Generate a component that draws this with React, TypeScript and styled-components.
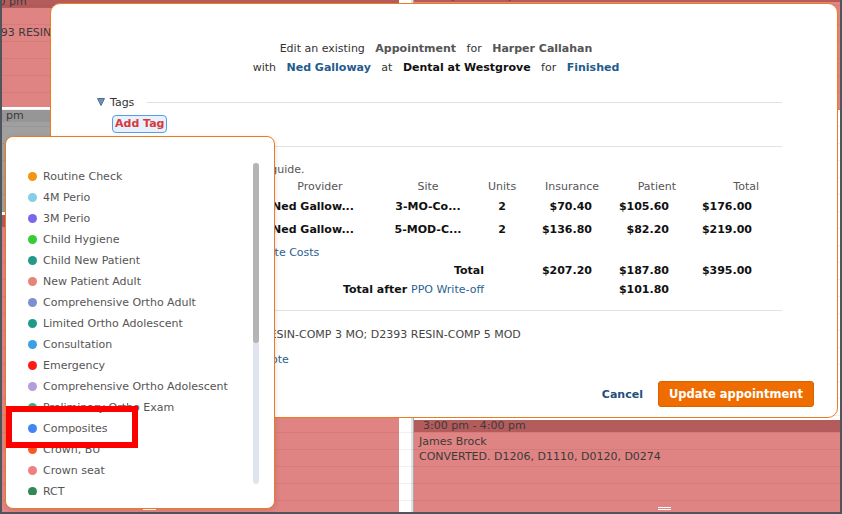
import React from "react";
import styled, { createGlobalStyle } from "styled-components";

const GlobalStyle = createGlobalStyle`
  html, body {
    margin: 0;
    padding: 0;
  }
  body {
    font-family: "DejaVu Sans", Verdana, sans-serif;
    font-size: 11px;
    color: #333;
  }
`;

type Tone = "pink" | "gray";

interface Appt {
  top: number;
  height: number;
  tone: Tone;
  time: string;
  indent: number;
  lines: string[];
  handle?: number;
}

// 캘린더 배경 (모달 뒤)
const columnA: Appt[] = [
  { top: -4, height: 111, tone: "pink", time: "2:00 pm - 3:00 pm", indent: 16, lines: ["Sofia Reyes", "D2392 MO; D2393 RESIN-COMP 5 MOD"] },
  { top: 110, height: 102, tone: "gray", time: "3:00 pm - 4:00 pm", indent: 13, lines: ["Blocked"] },
  { top: 215, height: 297, tone: "pink", time: "4:00 pm - 5:00 pm", indent: 13, lines: ["Mia Jensen"], handle: 235 },
];

const columnB: Appt[] = [
  { top: -10, height: 120, tone: "pink", time: "1:00 pm - 2:00 pm", indent: 9, lines: [] },
  { top: 420, height: 92, tone: "pink", time: "3:00 pm - 4:00 pm", indent: 9, lines: ["James Brock", "CONVERTED. D1206, D1110, D0120, D0274"], handle: 244 },
];

const tags = [
  { name: "Routine Check", color: "#f3960f" },
  { name: "4M Perio", color: "#86cdea" },
  { name: "3M Perio", color: "#7b66ee" },
  { name: "Child Hygiene", color: "#35cc35" },
  { name: "Child New Patient", color: "#239a88" },
  { name: "New Patient Adult", color: "#e8837a" },
  { name: "Comprehensive Ortho Adult", color: "#7e8fcf" },
  { name: "Limited Ortho Adolescent", color: "#1f9a8a" },
  { name: "Consultation", color: "#3d9fe6" },
  { name: "Emergency", color: "#ff1a14" },
  { name: "Comprehensive Ortho Adolescent", color: "#b39ddb" },
  { name: "Preliminary Ortho Exam", color: "#3cb371" },
  { name: "Composites", color: "#4285f4" },
  { name: "Crown, BU", color: "#ff5722" },
  { name: "Crown seat", color: "#f08080" },
  { name: "RCT", color: "#2e8b57" },
];

const procedures = [
  { code: "D2392", provider: "Ned Gallow...", site: "3-MO-Co...", units: "2", ins: "$70.40", pat: "$105.60", total: "$176.00" },
  { code: "D2393", provider: "Ned Gallow...", site: "5-MOD-C...", units: "2", ins: "$136.80", pat: "$82.20", total: "$219.00" },
];

const DayColumn = ({ appts, offset }: { appts: Appt[]; offset: number }) => (
  <Column>
    {appts.map((a) => (
      <Appointment key={a.top} $top={a.top} $height={a.height} $left={offset} $tone={a.tone} $handle={a.handle}>
        <ApptHeader $tone={a.tone} $indent={a.indent}>
          {a.time}
        </ApptHeader>
        <ApptBody>
          {a.lines.map((l) => (
            <div key={l}>{l}</div>
          ))}
        </ApptBody>
      </Appointment>
    ))}
  </Column>
);

const TagMenu = () => (
  <Menu>
    <TagList>
      {tags.map((t) => (
        <TagItem key={t.name}>
          <Dot $color={t.color} />
          {t.name}
        </TagItem>
      ))}
    </TagList>
    <Track>
      <Thumb />
    </Track>
  </Menu>
);

const App = () => {
  return (
    <>
      <GlobalStyle />
      <Screen>
        <Calendar>
          <DayColumn appts={columnA} offset={-94} />
          <Gutter />
          <DayColumn appts={columnB} offset={0} />
        </Calendar>

        <Modal>
          <Title>
            <div>
              Edit an existing <Em $tone='muted'>Appointment</Em> for <Em $tone='muted'>Harper Callahan</Em>
            </div>
            <div>
              with <Em $tone='link'>Ned Galloway</Em> at <Em $tone='dark'>Dental at Westgrove</Em> for{" "}
              <Em $tone='link'>Finished</Em>
            </div>
          </Title>

          <TagsRow>
            <svg width='8' height='8' viewBox='0 0 8 8'>
              <polygon points='0.5,0.5 7.5,0.5 4,7.5' fill='#6f93b8' stroke='#4c6f93' strokeWidth='1' strokeLinejoin='round' />
            </svg>
            <span>Tags</span>
            <Rule />
          </TagsRow>
          <AddTag>Add Tag</AddTag>
          <Divider $top={13} />

          <FormRow $top={15}>
            <Label>Procedures</Label>
            <div>
              <Hint>Fees per guide.</Hint>
              <CostTable>
                <HeadCell $align='left'>Code</HeadCell>
                <HeadCell $align='center'>Provider</HeadCell>
                <HeadCell $align='center'>Site</HeadCell>
                <HeadCell $align='center'>Units</HeadCell>
                <HeadCell $align='right'>Insurance</HeadCell>
                <HeadCell $align='right'>Patient</HeadCell>
                <HeadCell $align='right'>Total</HeadCell>
                {procedures.map((p) => (
                  <React.Fragment key={p.code}>
                    <DataCell $align='left'>{p.code}</DataCell>
                    <DataCell $align='left'>{p.provider}</DataCell>
                    <DataCell $align='center'>{p.site}</DataCell>
                    <DataCell $align='center'>{p.units}</DataCell>
                    <DataCell $align='right'>{p.ins}</DataCell>
                    <DataCell $align='right'>{p.pat}</DataCell>
                    <DataCell $align='right'>{p.total}</DataCell>
                  </React.Fragment>
                ))}
              </CostTable>
              <LinkLine>
                <Link>Recalculate Costs</Link>
              </LinkLine>
              <CostTable>
                <TotalLabel>Total</TotalLabel>
                <TotalCell />
                <TotalCell $align='right'>$207.20</TotalCell>
                <TotalCell $align='right'>$187.80</TotalCell>
                <TotalCell $align='right'>$395.00</TotalCell>
                <TotalLabel $short>
                  Total after <Link>PPO Write-off</Link>
                </TotalLabel>
                <TotalCell $short />
                <TotalCell $short />
                <TotalCell $short $align='right'>
                  $101.80
                </TotalCell>
                <TotalCell $short />
              </CostTable>
            </div>
          </FormRow>

          <Divider $top={11} />

          <FormRow $top={16}>
            <Label>Description</Label>
            <Value $shift={2}>D2392 RESIN-COMP 3 MO; D2393 RESIN-COMP 5 MOD</Value>
          </FormRow>
          <FormRow $top={9}>
            <Label>Notes</Label>
            <Value $shift={-5}>
              <Link>+ Add a Note</Link>
            </Value>
          </FormRow>

          <Footer>
            <Cancel>Cancel</Cancel>
            <PrimaryButton>Update appointment</PrimaryButton>
          </Footer>
        </Modal>

        <TagMenu />
        <Highlight />
      </Screen>
    </>
  );
};

export default App;

const Screen = styled.div`
  position: relative;
  width: 842px;
  height: 514px;
  overflow: hidden;
  padding: 0 2px 2px;
  box-sizing: border-box;
  background: #50555b;
`;

const Calendar = styled.div`
  position: relative;
  height: 512px;
  display: grid;
  grid-template-columns: 397px 14px 1fr;
  background: #fff;

  &::after {
    content: "";
    position: absolute;
    inset: 0;
    pointer-events: none;
    background: repeating-linear-gradient(to bottom, transparent 0 16px, rgba(0, 0, 0, 0.055) 16px 17px);
    background-position: 0 8px;
  }
`;

const Column = styled.div`
  position: relative;
  overflow: hidden;

  &:last-child {
    border-left: 1px solid #a9a9a9;
  }
`;

const Gutter = styled.div`
  border-right: 2px solid #e2e2e2;
`;

const Appointment = styled.div<{ $top: number; $height: number; $left: number; $tone: Tone; $handle?: number }>`
  position: absolute;
  top: ${(p) => p.$top}px;
  left: ${(p) => p.$left}px;
  right: 0;
  height: ${(p) => p.$height}px;
  background: ${(p) => (p.$tone === "pink" ? "#e08383" : "#a0a0a0")};
  color: #3a3a3a;
  white-space: nowrap;

  &::after {
    content: "";
    display: ${(p) => (p.$handle ? "block" : "none")};
    position: absolute;
    left: ${(p) => p.$handle ?? 0}px;
    bottom: 2px;
    width: 13px;
    height: 1px;
    border-top: 1px solid #fff;
    border-bottom: 1px solid #fff;
  }
`;

const ApptHeader = styled.div<{ $tone: Tone; $indent: number }>`
  height: 12px;
  line-height: 12px;
  padding-left: ${(p) => p.$indent}px;
  background: ${(p) => (p.$tone === "pink" ? "#b45c5c" : "#969696")};
`;

const ApptBody = styled.div`
  padding: 3px 5px 0;
  line-height: 14.5px;
`;

const Modal = styled.div`
  position: absolute;
  left: 50px;
  top: 3px;
  width: 788px;
  height: 415px;
  box-sizing: border-box;
  background: #fff;
  border: 1px solid #ee7a1f;
  border-radius: 10px;
  padding: 35px 55px 0 46px;
  display: flex;
  flex-direction: column;
`;

const Title = styled.div`
  text-align: center;
  line-height: 19px;
  color: #333;
`;

const Em = styled.b<{ $tone: "muted" | "link" | "dark" }>`
  margin: 0 7px;
  color: ${(p) => (p.$tone === "muted" ? "#555" : p.$tone === "link" ? "#245b8e" : "#111")};
`;

const TagsRow = styled.div`
  display: flex;
  align-items: center;
  gap: 5px;
  height: 16px;
  margin-top: 17px;
  color: #333;

  svg {
    flex: none;
  }
`;

const Rule = styled.div`
  flex: 1;
  height: 1px;
  margin-left: 8px;
  background: #e0e0e0;
`;

const AddTag = styled.button`
  align-self: flex-start;
  box-sizing: border-box;
  height: 18px;
  margin: 5px 0 0 15px;
  padding: 0 2px;
  font: bold 11px "DejaVu Sans", Verdana, sans-serif;
  line-height: 16px;
  color: #d9383c;
  background: #e8f2fd;
  border: 1px solid #5b9be8;
  border-radius: 4px;
`;

const Divider = styled.div<{ $top: number }>`
  height: 1px;
  margin-top: ${(p) => p.$top}px;
  background: #e2e2e2;
  flex: none;
`;

const FormRow = styled.div<{ $top: number }>`
  display: grid;
  grid-template-columns: 123px 1fr;
  margin-top: ${(p) => p.$top}px;
  line-height: 16px;
`;

const Label = styled.div`
  color: #555;
`;

const Value = styled.div<{ $shift: number }>`
  color: #444;
  margin-left: ${(p) => p.$shift}px;
  white-space: nowrap;
`;

const Hint = styled.div`
  color: #555;
  line-height: 16px;
`;

const CostTable = styled.div`
  display: grid;
  grid-template-columns: 52px 96px 120px 28px 83px 77px 83px;
`;

const HeadCell = styled.div<{ $align: "left" | "center" | "right" }>`
  height: 17px;
  line-height: 18px;
  text-align: ${(p) => p.$align};
  color: #555;
  white-space: nowrap;
`;

const DataCell = styled.div<{ $align: "left" | "center" | "right" }>`
  height: 23px;
  line-height: 23px;
  text-align: ${(p) => p.$align};
  padding-right: ${(p) => (p.$align === "right" ? 7 : 0)}px;
  font-weight: bold;
  color: #111;
  white-space: nowrap;
`;

const TotalLabel = styled.div<{ $short?: boolean }>`
  grid-column: span 3;
  height: ${(p) => (p.$short ? 18 : 20)}px;
  line-height: ${(p) => (p.$short ? 18 : 20)}px;
  text-align: right;
  padding-right: 4px;
  font-weight: bold;
  color: #111;
`;

const TotalCell = styled.div<{ $short?: boolean; $align?: "right" }>`
  height: ${(p) => (p.$short ? 18 : 20)}px;
  line-height: ${(p) => (p.$short ? 18 : 20)}px;
  text-align: ${(p) => p.$align ?? "left"};
  padding-right: 7px;
  font-weight: bold;
  color: #111;
`;

const LinkLine = styled.div`
  margin: 4px 0 0;
  padding-left: 2px;
  line-height: 16px;
`;

const Link = styled.a`
  color: #2a5f92;
  font-weight: normal;
  text-decoration: none;
`;

const Footer = styled.div`
  display: flex;
  justify-content: flex-end;
  align-items: center;
  gap: 15px;
  margin: 13px -32px 0 0;
`;

const Cancel = styled.a`
  font-weight: bold;
  color: #1f4f7e;
`;

const PrimaryButton = styled.button`
  height: 26px;
  padding: 0 10px;
  font: bold 11.5px "DejaVu Sans", Verdana, sans-serif;
  color: #fff;
  background: #ef6d00;
  border: 1px solid #d86200;
  border-radius: 3px;
`;

const Menu = styled.div`
  position: absolute;
  left: 5px;
  top: 136px;
  width: 270px;
  height: 373px;
  box-sizing: border-box;
  display: flex;
  padding: 19px 15px 13px 0;
  background: #fff;
  border: 1px solid #ee7a1f;
  border-radius: 8px;
  box-shadow: 1px 1px 5px rgba(0, 0, 0, 0.1);
`;

const TagList = styled.ul`
  flex: 1;
  margin: 0;
  padding: 10px 0 0 22px;
  list-style: none;
  overflow: hidden;
`;

const TagItem = styled.li`
  display: flex;
  align-items: center;
  gap: 6px;
  height: 21px;
  color: #555;
  white-space: nowrap;
`;

const Dot = styled.span<{ $color: string }>`
  flex: none;
  width: 9px;
  height: 9px;
  border-radius: 50%;
  background: ${(p) => p.$color};
`;

const Track = styled.div`
  width: 6px;
  margin: 7px 0 11px;
  border-radius: 3px;
  background: #e0e4ee;
`;

const Thumb = styled.div`
  height: 180px;
  border-radius: 3px;
  background: #b4b4b4;
`;

const Highlight = styled.div`
  position: absolute;
  left: 6px;
  top: 406px;
  width: 132px;
  height: 42px;
  box-sizing: border-box;
  border: 6px solid #ff0000;
`;
